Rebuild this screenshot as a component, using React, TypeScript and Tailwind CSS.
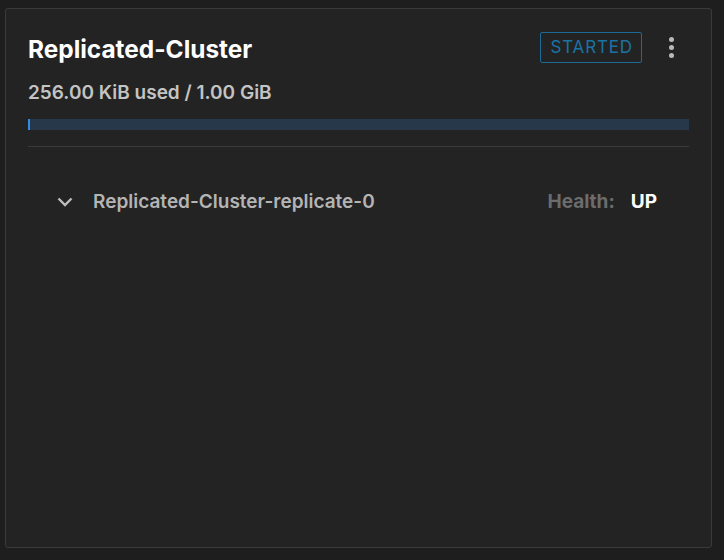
import React from "react";

const replicas = [{ name: "Replicated-Cluster-replicate-0", health: "UP" }];

export default function App() {
  return (
    <div
      className="min-h-[560px] w-[724px] bg-[#1e1e1e] pt-[8px] pl-[5px]"
      style={{ fontFamily: "Inter, 'Liberation Sans', sans-serif" }}
    >
      <div className="flex h-[540px] w-[707px] flex-col rounded-[3px] border border-[#3a3a3a] bg-[#232323] px-[22px] pt-[20px]">
        <div className="flex items-start justify-between">
          <h2 className="pt-[1px] text-[24.4px] leading-[38px] font-bold text-white">Replicated-Cluster</h2>
          <div className="flex items-center gap-[27px] pt-[3px]">
            <span className="rounded-[2px] border border-[#1c6a96] pr-[8px] pl-[9px] text-[17px] leading-[29px] tracking-[0.85px] text-[#1a73a4]">
              STARTED
            </span>
            <span className="flex flex-col gap-[3px] pr-[15px]">
              <span className="h-[5px] w-[5px] rounded-full bg-[#b9b9b9]" />
              <span className="h-[5px] w-[5px] rounded-full bg-[#b9b9b9]" />
              <span className="h-[5px] w-[5px] rounded-full bg-[#b9b9b9]" />
            </span>
          </div>
        </div>
        <p className="mt-[14px] text-[19px] leading-[22px] font-semibold text-[#c4c4c4]">
          256.00 KiB used / 1.00 GiB
        </p>
        <div className="mt-[15px] h-[11px] w-full bg-[#27384a]">
          <div className="h-full w-[1.5px] bg-[#2f8ae8]" />
        </div>
        <div className="mt-[16px] h-px w-full bg-[#3a3a3a]" />
        <div className="pt-[43px]">
          {replicas.map((r) => (
            <div key={r.name} className="flex items-center justify-between pl-[29px] pr-[32px]">
              <div className="flex items-center gap-[20px]">
                <svg width="16" height="16" viewBox="0 0 16 16" fill="none" stroke="#bdbdbd" strokeWidth="2.4">
                  <path d="M1.5 4.5l6.5 6.5 6.5-6.5" />
                </svg>
                <span className="text-[19px] leading-[24px] font-semibold text-[#b4b4b4]">{r.name}</span>
              </div>
              <div className="flex items-center gap-[16px] text-[19px] leading-[24px] font-bold">
                <span className="text-[#6c6c6c]">Health:</span>
                <span className="text-white">{r.health}</span>
              </div>
            </div>
          ))}
        </div>
      </div>
    </div>
  );
}
